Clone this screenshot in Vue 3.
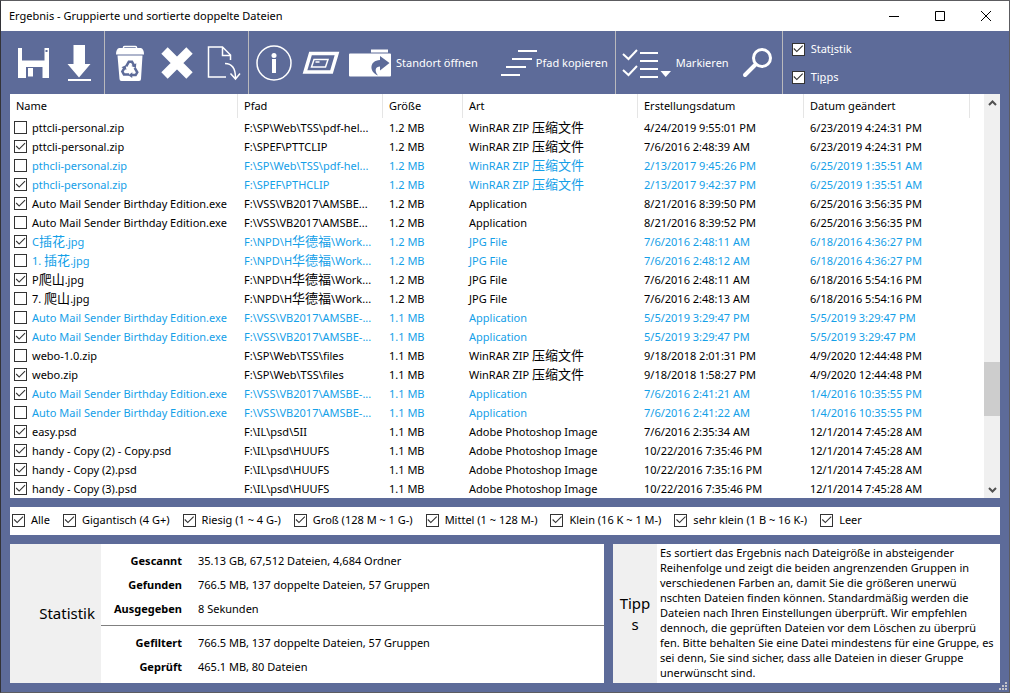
<script setup>
import { ref, reactive } from 'vue'

const showStats = ref(true)
const showTips = ref(true)

const zip = 'WinRAR ZIP 压缩文件'
const psd = 'Adobe Photoshop Image'
const auto = 'Auto Mail Sender Birthday Edition.exe'

const columns = ['Name', 'Pfad', 'Größe', 'Art', 'Erstellungsdatum', 'Datum geändert']

// Splits a text into runs so that Han characters can take their own size.
const runs = (text) =>
  text.split(/([\u4e00-\u9fff]+)/).filter(Boolean).map((t) => ({ t, han: /[\u4e00-\u9fff]/.test(t) }))

const files = reactive([
  [0, 0, 'pttcli-personal.zip', 'F:\\SP\\Web\\TSS\\pdf-hel...', '1.2 MB', zip, '4/24/2019 9:55:01 PM', '6/23/2019 4:24:31 PM'],
  [1, 0, 'pttcli-personal.zip', 'F:\\SPEF\\PTTCLIP', '1.2 MB', zip, '7/6/2016 2:48:39 AM', '6/23/2019 4:24:31 PM'],
  [0, 1, 'pthcli-personal.zip', 'F:\\SP\\Web\\TSS\\pdf-hel...', '1.2 MB', zip, '2/13/2017 9:45:26 PM', '6/25/2019 1:35:51 AM'],
  [1, 1, 'pthcli-personal.zip', 'F:\\SPEF\\PTHCLIP', '1.2 MB', zip, '2/13/2017 9:42:37 PM', '6/25/2019 1:35:51 AM'],
  [1, 0, auto, 'F:\\VSS\\VB2017\\AMSBE...', '1.2 MB', 'Application', '8/21/2016 8:39:50 PM', '6/25/2016 3:56:35 PM'],
  [0, 0, auto, 'F:\\VSS\\VB2017\\AMSBE...', '1.2 MB', 'Application', '8/21/2016 8:39:52 PM', '6/25/2016 3:56:35 PM'],
  [1, 1, 'C插花.jpg', 'F:\\NPD\\H华德福\\Work...', '1.2 MB', 'JPG File', '7/6/2016 2:48:11 AM', '6/18/2016 4:36:27 PM'],
  [0, 1, '1. 插花.jpg', 'F:\\NPD\\H华德福\\Work...', '1.2 MB', 'JPG File', '7/6/2016 2:48:12 AM', '6/18/2016 4:36:27 PM'],
  [1, 0, 'P爬山.jpg', 'F:\\NPD\\H华德福\\Work...', '1.2 MB', 'JPG File', '7/6/2016 2:48:11 AM', '6/18/2016 5:54:16 PM'],
  [0, 0, '7. 爬山.jpg', 'F:\\NPD\\H华德福\\Work...', '1.2 MB', 'JPG File', '7/6/2016 2:48:13 AM', '6/18/2016 5:54:16 PM'],
  [0, 1, auto, 'F:\\VSS\\VB2017\\AMSBE-...', '1.1 MB', 'Application', '5/5/2019 3:29:47 PM', '5/5/2019 3:29:47 PM'],
  [1, 1, auto, 'F:\\VSS\\VB2017\\AMSBE-...', '1.1 MB', 'Application', '5/5/2019 3:29:47 PM', '5/5/2019 3:29:47 PM'],
  [0, 0, 'webo-1.0.zip', 'F:\\SP\\Web\\TSS\\files', '1.1 MB', zip, '9/18/2018 2:01:31 PM', '4/9/2020 12:44:48 PM'],
  [1, 0, 'webo.zip', 'F:\\SP\\Web\\TSS\\files', '1.1 MB', zip, '9/18/2018 1:58:27 PM', '4/9/2020 12:44:48 PM'],
  [1, 1, auto, 'F:\\VSS\\VB2017\\AMSBE-...', '1.1 MB', 'Application', '7/6/2016 2:41:21 AM', '1/4/2016 10:35:55 PM'],
  [0, 1, auto, 'F:\\VSS\\VB2017\\AMSBE-...', '1.1 MB', 'Application', '7/6/2016 2:41:22 AM', '1/4/2016 10:35:55 PM'],
  [1, 0, 'easy.psd', 'F:\\IL\\psd\\5II', '1.1 MB', psd, '7/6/2016 2:35:34 AM', '12/1/2014 7:45:28 AM'],
  [1, 0, 'handy - Copy (2) - Copy.psd', 'F:\\IL\\psd\\HUUFS', '1.1 MB', psd, '10/22/2016 7:35:46 PM', '12/1/2014 7:45:28 AM'],
  [1, 0, 'handy - Copy (2).psd', 'F:\\IL\\psd\\HUUFS', '1.1 MB', psd, '10/22/2016 7:35:16 PM', '12/1/2014 7:45:28 AM'],
  [1, 0, 'handy - Copy (3).psd', 'F:\\IL\\psd\\HUUFS', '1.1 MB', psd, '10/22/2016 7:35:46 PM', '12/1/2014 7:45:28 AM'],
].map(([checked, alt, name, ...cells]) => ({ checked: !!checked, alt: !!alt, name, cells })))

const filters = reactive([
  'Alle', 'Gigantisch (4 G+)', 'Riesig (1 ~ 4 G-)', 'Groß (128 M ~ 1 G-)',
  'Mittel (1 ~ 128 M-)', 'Klein (16 K ~ 1 M-)', 'sehr klein (1 B ~ 16 K-)', 'Leer',
].map((label) => ({ label, checked: true })))

const scanStats = [
  ['Gescannt', '35.13 GB, 67,512 Dateien, 4,684 Ordner'],
  ['Gefunden', '766.5 MB, 137 doppelte Dateien, 57 Gruppen'],
  ['Ausgegeben', '8 Sekunden'],
]
const filterStats = [
  ['Gefiltert', '766.5 MB, 137 doppelte Dateien, 57 Gruppen'],
  ['Geprüft', '465.1 MB, 80 Dateien'],
]

const tipLines = [
  'Es sortiert das Ergebnis nach Dateigröße in absteigender',
  'Reihenfolge und zeigt die beiden angrenzenden Gruppen in',
  'verschiedenen Farben an, damit Sie die größeren unerwü',
  'nschten Dateien finden können. Standardmäßig werden die',
  'Dateien nach Ihren Einstellungen überprüft. Wir empfehlen',
  'dennoch, die geprüften Dateien vor dem Löschen zu überprü',
  'fen. Bitte behalten Sie eine Datei mindestens für eine Gruppe, es',
  'sei denn, Sie sind sicher, dass alle Dateien in dieser Gruppe',
  'unerwünscht sind.',
]
</script>

<template>
  <div class="window">
    <header class="titlebar">
      <h1>Ergebnis - Gruppierte und sortierte doppelte Dateien</h1>
      <div class="caption">
        <button type="button" aria-label="Minimieren">
          <svg width="10" height="10" viewBox="0 0 10 10"><path d="M0 5.5h10" /></svg>
        </button>
        <button type="button" aria-label="Maximieren">
          <svg width="10" height="10" viewBox="0 0 10 10"><path d="M.5.5h9v9h-9z" /></svg>
        </button>
        <button type="button" aria-label="Schließen">
          <svg width="10" height="10" viewBox="0 0 10 10"><path d="M0 0l10 10M10 0L0 10" /></svg>
        </button>
      </div>
    </header>

    <nav class="toolbar">
      <div class="group">
        <button type="button" aria-label="Speichern">
          <svg width="46" height="63" viewBox="0 0 46 63">
            <path class="solid" d="M7 17h4v12.500h22.500V17H38v30H7z" />
            <path class="hole" d="M15 36h16.500v11H15zM34.500 19h2v2h-2z" />
            <path class="solid" d="M17 37h5v8.500h-5z" />
          </svg>
        </button>
        <button type="button" aria-label="Herunterladen">
          <svg width="46" height="63" viewBox="0 0 46 63">
            <path class="solid" d="M16.500 14H28v19h5.500L22 46.500 10.500 33h6zM11 48h23v2H11z" />
          </svg>
        </button>
      </div>

      <div class="group">
        <button type="button" aria-label="Papierkorb">
          <svg width="46" height="63" viewBox="0 0 46 63">
            <path class="line" d="M16.500 18v-1.500q0-1 1-1h11q1 0 1 1V18" />
            <path class="solid" d="M12 17h22q3 1 3 6.500H9Q9 18 12 17zM10.500 24.500h25L34 48q0 2-2 2H14.500q-2 0-2-2z" />
            <g class="recycle">
              <path d="M19.200 35.300l2.600-4.500h3.200l2 3.500" />
              <path d="M19.200 35.300l2.600-4.500h3.200l2 3.500" transform="rotate(120 23 38.500)" />
              <path d="M19.200 35.300l2.600-4.500h3.200l2 3.500" transform="rotate(240 23 38.500)" />
            </g>
            <g class="hole">
              <path d="M29.300 32.300l-.4 4.700-4.600-1.900z" />
              <path d="M29.300 32.300l-.4 4.700-4.600-1.900z" transform="rotate(120 23 38.500)" />
              <path d="M29.300 32.300l-.4 4.700-4.600-1.900z" transform="rotate(240 23 38.500)" />
            </g>
          </svg>
        </button>
        <button type="button" aria-label="Löschen">
          <svg width="46" height="63" viewBox="0 0 46 63">
            <path class="cross" d="M10.500 19.500l25 25M35.500 19.500l-25 25" />
          </svg>
        </button>
        <button type="button" aria-label="Verschieben">
          <svg width="46" height="63" viewBox="0 0 46 63">
            <path class="line" d="M29.500 29v-5L21.500 16h-14v30H25M21.500 16v8.500h8M24 32.500C31 32.500 34.500 37 34.500 47M29.500 42.500l5 5.500 4.500-5.500" />
          </svg>
        </button>
      </div>

      <div class="group">
        <button type="button" aria-label="Information">
          <svg width="46" height="63" viewBox="0 0 46 63">
            <circle class="line" cx="23" cy="32" r="17" />
            <circle class="solid" cx="23" cy="24.500" r="2.500" />
            <path class="solid" d="M21 28h4v14h-4z" />
          </svg>
        </button>
        <button type="button" aria-label="Datei öffnen">
          <svg width="46" height="63" viewBox="0 0 46 63">
            <path class="frame" d="M12.500 22.500h26.500l-5.500 18.500H7z" />
            <path class="line" d="M16 28.500h14L27.500 36h-14zM17.500 31h4" />
          </svg>
        </button>
        <button type="button" class="text open">
          <svg width="42" height="63" viewBox="0 0 42 63">
            <path class="solid" d="M22 18.500h17v3H22zM1 22.500h40q1 0 1 1v21q0 1-1 1H1q-1 0-1-1v-21q0-1 1-1z" />
            <path class="hole" d="M31 25l9.500 7-9.500 7.500v-4c-4.500 0-6 4-2 9C20 41 20 29.500 31 29z" />
          </svg>
          <span>Standort öffnen</span>
        </button>
        <button type="button" class="text copy">
          <svg width="38" height="63" viewBox="0 0 38 63">
            <path class="bars" d="M18 20h19M12 28h20M6 36h20M1 44h19" />
          </svg>
          <span>Pfad kopieren</span>
        </button>
      </div>

      <div class="group">
        <button type="button" class="text mark">
          <svg width="50" height="63" viewBox="0 0 50 63">
            <path class="bars" d="M18 22h18M18 30h18M18 38h18M18 46h18M1 23l5.500 5L15 19M1 39l5.500 5L15 35" />
            <path class="solid" d="M38.500 40H49l-5.300 6z" />
          </svg>
          <span>Markieren</span>
        </button>
        <button type="button" aria-label="Suchen">
          <svg width="46" height="63" viewBox="0 0 46 63">
            <circle class="lens" cx="27" cy="27" r="8.500" />
            <path class="handle" d="M20.500 33.500L10 44" />
          </svg>
        </button>
      </div>

      <div class="toggles">
        <label><input v-model="showStats" type="checkbox" /><span>Stat<u>i</u>stik</span></label>
        <label><input v-model="showTips" type="checkbox" /><span>Ti<u>p</u>ps</span></label>
      </div>
    </nav>

    <main class="content">
      <section class="list">
        <table>
          <colgroup>
            <col class="c-name" /><col class="c-path" /><col class="c-size" />
            <col class="c-type" /><col class="c-date" /><col class="c-date" /><col />
          </colgroup>
          <thead>
            <tr>
              <th v-for="c in columns" :key="c" scope="col">{{ c }}</th>
              <td></td>
            </tr>
          </thead>
          <tbody>
            <tr v-for="(f, i) in files" :key="i" :class="{ alt: f.alt }">
              <td class="name">
                <label>
                  <input v-model="f.checked" type="checkbox" />
                  <span class="file"><span v-for="(r, k) in runs(f.name)" :key="k" :class="{ han: r.han }">{{ r.t }}</span></span>
                </label>
              </td>
              <td v-for="(c, j) in f.cells" :key="j"><span v-for="(r, k) in runs(c)" :key="k" :class="{ han: r.han }">{{ r.t }}</span></td>
              <td></td>
            </tr>
          </tbody>
        </table>
        <div class="scrollbar">
          <button type="button" aria-label="Nach oben">
            <svg width="9" height="6" viewBox="0 0 9 6"><path d="M1 5l3.500-3.500L8 5" /></svg>
          </button>
          <div class="track"><div class="thumb"></div></div>
          <button type="button" aria-label="Nach unten">
            <svg width="9" height="6" viewBox="0 0 9 6"><path d="M1 1l3.500 3.500L8 1" /></svg>
          </button>
        </div>
      </section>

      <section class="filters">
        <label v-for="f in filters" :key="f.label">
          <input v-model="f.checked" type="checkbox" /><span>{{ f.label }}</span>
        </label>
      </section>

      <section class="panels">
        <article v-if="showStats" class="stats">
          <h2>Statistik</h2>
          <div class="figures">
            <dl>
              <template v-for="[k, v] in scanStats" :key="k"><dt>{{ k }}</dt><dd>{{ v }}</dd></template>
            </dl>
            <dl>
              <template v-for="[k, v] in filterStats" :key="k"><dt>{{ k }}</dt><dd>{{ v }}</dd></template>
            </dl>
          </div>
        </article>
        <article v-if="showTips" class="tips">
          <h2>Tipps</h2>
          <p><span v-for="line in tipLines" :key="line">{{ line }}</span></p>
        </article>
      </section>
    </main>

    <svg class="grip" width="9" height="9" viewBox="0 0 9 9">
      <path d="M6 0h2v2H6zM3 3h2v2H3zM6 3h2v2H6zM0 6h2v2H0zM3 6h2v2H3zM6 6h2v2H6z" />
    </svg>
  </div>
</template>

<style>
body {
  background: #5d6b99;
}
</style>

<style scoped>
* {
  box-sizing: border-box;
}

.window {
  position: relative;
  display: flex;
  flex-direction: column;
  min-height: 100vh;
  border: 1px solid #5c5c60;
  border-left-color: #333338;
  background: #5d6b99;
  color: #000;
  font: 11px/18px "Noto Sans", "Noto Sans CJK SC", sans-serif;
}

button {
  display: flex;
  align-items: center;
  justify-content: center;
  padding: 0;
  border: 0;
  background: none;
  color: inherit;
  font: inherit;
}

svg {
  display: block;
  flex: none;
}

h1,
h2,
p,
dl,
dd {
  margin: 0;
}

label {
  display: flex;
  align-items: center;
  white-space: nowrap;
}

input {
  display: block;
  flex: none;
  width: 13px;
  height: 13px;
  margin: 0;
  appearance: none;
  border: 1px solid #333;
  background: #fff;
}

input:checked::after {
  content: "";
  display: block;
  height: 11px;
  background: #333;
  clip-path: polygon(7% 49%, 14% 42%, 38% 66%, 88% 16%, 95% 23%, 38% 80%);
}

.titlebar {
  display: flex;
  justify-content: space-between;
  height: 30px;
  background: #fff;
}

h1 {
  padding-left: 8px;
  font-size: 11px;
  font-weight: 400;
  line-height: 30px;
}

.caption {
  display: flex;
}

.caption button {
  width: 46px;
  height: 29px;
}

.caption path {
  fill: none;
  stroke: #000;
}

.toolbar {
  display: flex;
  height: 63px;
  color: #fff;
}

.group {
  display: flex;
  gap: 1px;
  padding: 0 1px 0 2px;
  border-right: 1px solid #b9b9bd;
}

.group:first-child {
  gap: 0;
  padding-left: 10px;
}

.text {
  gap: 5px;
  white-space: nowrap;
}

.open {
  margin-left: 4px;
}

.copy {
  gap: 0;
  margin-left: 21px;
  padding-right: 6px;
}

.copy span {
  margin-left: -2px;
}

.mark {
  gap: 4px;
  padding: 0 5px 0 4px;
}

.solid {
  fill: #fff;
}

.hole {
  fill: #5d6b99;
}

.line,
.frame,
.bars,
.cross,
.lens,
.handle {
  fill: none;
  stroke: #fff;
  stroke-width: 2;
}

.line {
  stroke-width: 1.5;
}

.frame {
  stroke-width: 3.5;
}

.cross {
  stroke-width: 9;
}

.lens {
  stroke-width: 3;
}

.handle {
  stroke-width: 4;
  stroke-linecap: round;
}

.recycle {
  fill: none;
  stroke: #5d6b99;
  stroke-width: 2.5;
}

.toggles {
  display: flex;
  flex-direction: column;
  gap: 10px;
  padding: 9px;
}

.toggles label {
  gap: 6px;
}

.content {
  display: flex;
  flex: 1;
  flex-direction: column;
  gap: 9px;
  padding: 0 9px 9px;
}

.list {
  display: flex;
  background: #fff;
}

table {
  flex: 1;
  width: 0;
  table-layout: fixed;
  border-collapse: separate;
  border-spacing: 0;
}

.c-name {
  width: 228px;
}

.c-path {
  width: 145px;
}

.c-size {
  width: 80px;
}

.c-type {
  width: 175px;
}

.c-date {
  width: 166px;
}

th {
  height: 24px;
  padding: 0 6px;
  border-right: 1px solid #e5e5e5;
  font-weight: 400;
  text-align: left;
}

td {
  height: 19px;
  padding: 0 0 0 6px;
  line-height: 19px;
  white-space: nowrap;
}

.name {
  padding-left: 4px;
}

.name label {
  gap: 5px;
  height: 19px;
}

.han {
  font-size: 13px;
  line-height: 1;
}

.alt {
  color: #14a0e8;
}

.scrollbar {
  display: flex;
  flex-direction: column;
  width: 16px;
  background: #f0f0f0;
}

.scrollbar button {
  height: 17px;
}

.scrollbar path {
  fill: none;
  stroke: #505050;
  stroke-width: 2;
}

.track {
  display: flex;
  flex: 1;
  flex-direction: column;
  justify-content: flex-end;
  padding-bottom: 65px;
}

.thumb {
  height: 54px;
  background: #cdcdcd;
}

.filters {
  display: flex;
  gap: 13px;
  height: 28px;
  padding: 0 2px 2px;
  background: #fff;
}

.filters label {
  gap: 6px;
}

.panels {
  display: flex;
  flex: 1;
  gap: 9px;
}

.stats,
.tips {
  display: flex;
  background: #fff;
}

.stats {
  flex: 594;
}

.tips {
  flex: 387;
  min-width: 0;
}

h2 {
  display: flex;
  flex: none;
  align-items: center;
  justify-content: flex-end;
  width: 91px;
  padding-right: 6px;
  background: #f0f0f0;
  font-size: 15px;
  font-weight: 400;
  line-height: 21px;
}

.tips h2 {
  justify-content: center;
  width: 44px;
  padding: 0 5px;
  text-align: center;
  word-break: break-all;
}

.figures {
  flex: 1;
}

dl {
  display: grid;
  grid-template-columns: 81px 1fr;
  column-gap: 16px;
  padding: 5px 0 4px;
  line-height: 24px;
}

dl + dl {
  border-top: 1px solid #808080;
}

dt {
  font-weight: 700;
  text-align: right;
}

.tips p {
  padding: 1px 3px;
}

.tips span {
  display: block;
  line-height: 15px;
  white-space: nowrap;
}

.grip {
  position: absolute;
  right: 1px;
  bottom: 1px;
  fill: #c4c4c8;
}
</style>
